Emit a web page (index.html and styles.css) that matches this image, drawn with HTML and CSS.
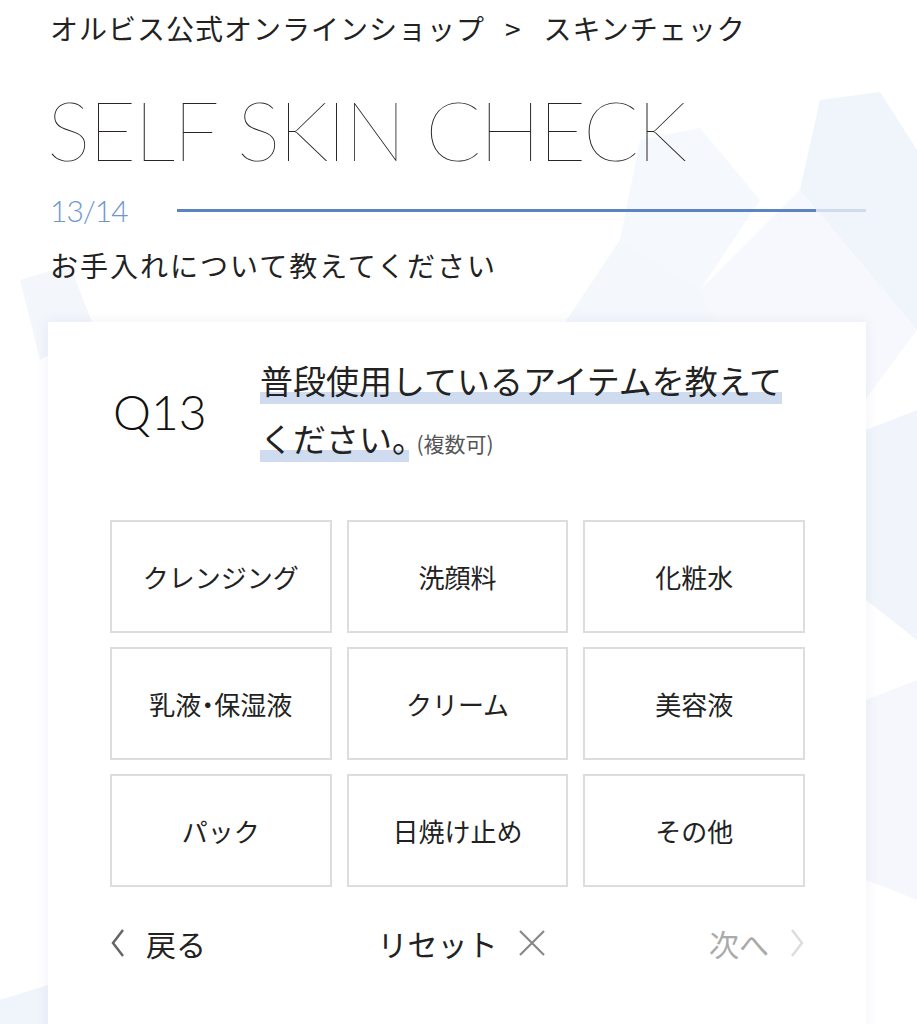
FILE: index.html
```html
<!DOCTYPE html>
<html lang="ja">
<head>
    <meta charset="UTF-8">
    <meta name="viewport" content="width=device-width, initial-scale=1.0">
    <title>SELF SKIN CHECK | オルビス公式オンラインショップ</title>
    <link rel="stylesheet" href="styles.css">
</head>
<body>

<!-- 背景の多角形 -->
<svg class="bg" width="917" height="1024" viewBox="0 0 917 1024" aria-hidden="true">
    <polygon points="820,100 880,92 917,150 917,330 800,190" fill="#f0f4fb"/>
    <polygon points="640,140 700,128 760,200 700,290 620,240" fill="#f5f8fd"/>
    <polygon points="700,290 800,190 917,330 850,420 760,400" fill="#f6f8fd"/>
    <polygon points="560,330 620,240 700,290 760,400 640,420" fill="#f4f7fc"/>
    <polygon points="866,430 917,410 917,640 866,600" fill="#f1f5fb"/>
    <polygon points="866,700 917,680 917,900 866,880" fill="#f5f7fc"/>
    <polygon points="20,280 70,265 95,330 40,360" fill="#f3f6fb"/>
    <polygon points="0,1000 48,985 48,1024 0,1024" fill="#f0f4fb"/>
</svg>

<div class="page">
    <p class="breadcrumb">オルビス公式オンラインショップ<span class="sep">&gt;</span>スキンチェック</p>

    <h1 class="title">SELF SKIN CHECK</h1>

    <div class="progress">
        <span class="progress-count">13/14</span>
        <div class="progress-bar"><div class="progress-fill" style="width: 92.8%;"></div></div>
    </div>

    <p class="lead">お手入れについて教えてください</p>

    <div class="card">
        <div class="question">
            <div class="q-num">Q13</div>
            <p class="q-text"><span class="mark">普段使用しているアイテムを教えてください<span class="half">。</span></span><span class="note">(複数可)</span></p>
        </div>

        <div class="choices">
            <button class="choice">クレンジング</button>
            <button class="choice">洗顔料</button>
            <button class="choice">化粧水</button>
            <button class="choice">乳液<span class="half">・</span>保湿液</button>
            <button class="choice">クリーム</button>
            <button class="choice">美容液</button>
            <button class="choice">パック</button>
            <button class="choice">日焼け止め</button>
            <button class="choice">その他</button>
        </div>

        <div class="nav">
            <a class="nav-back">
                <svg width="16" height="32" viewBox="0 0 16 32"><polyline points="13,3 3,16 13,29" fill="none" stroke="#666" stroke-width="2.5"/></svg>
                戻る
            </a>
            <a class="nav-reset">
                リセット
                <svg width="28" height="28" viewBox="0 0 28 28"><path d="M2 2 L26 26 M26 2 L2 26" stroke="#888" stroke-width="2.2"/></svg>
            </a>
            <a class="nav-next">
                次へ
                <svg width="16" height="32" viewBox="0 0 16 32"><polyline points="3,3 13,16 3,29" fill="none" stroke="#ddd" stroke-width="2.5"/></svg>
            </a>
        </div>
    </div>
</div>

</body>
</html>
```

FILE: styles.css
```css
body {
    margin: 0;
    background-color: #fff;
    color: #222;
    font-family: "Noto Sans CJK JP", "Noto Sans", sans-serif;
    overflow: hidden;
}
.bg {
    position: absolute;
    top: 0;
    left: 0;
    z-index: 0;
}
.page {
    position: relative;
    z-index: 1;
    padding: 0 51px 0 50px;
}
.breadcrumb {
    margin: 0;
    padding-top: 8px;
    font-size: 28px;
    line-height: 40px;
    letter-spacing: 1px;
}
.breadcrumb .sep {
    margin: 0 22px 0 20px;
}
.title {
    margin: 40px 0 0 -3px;
    font-family: Lato, sans-serif;
    font-weight: 100;
    font-size: 82px;
    line-height: 82px;
    letter-spacing: -2px;
    color: #2a2424;
}
.progress {
    display: flex;
    align-items: center;
    margin-top: 22px;
}
.progress-count {
    width: 127px;
    font-family: Lato, sans-serif;
    font-weight: 300;
    font-size: 30px;
    letter-spacing: -1px;
    color: #6f97cf;
}
.progress-bar {
    flex: 1;
    height: 3px;
    background-color: #d0dcee;
}
.progress-fill {
    height: 100%;
    background-color: #5b84c0;
}
.lead {
    margin: 17px 0 0;
    font-size: 28px;
    line-height: 40px;
    letter-spacing: 2px;
}
.card {
    margin: 37px 0 0 -2px;
    padding: 29px 61px 80px 62px;
    background-color: #fff;
    box-shadow: 0 0 12px rgba(120, 140, 180, 0.12);
}
.question {
    display: flex;
    align-items: center;
}
.q-num {
    width: 147px;
    padding-left: 3px;
    font-family: Lato, sans-serif;
    font-weight: 300;
    font-size: 48px;
    color: #111;
}
.q-text {
    flex: 1;
    margin: 0;
    font-size: 33px;
    line-height: 58px;
}
.mark {
    background: linear-gradient(transparent 76%, #cfdcef 76%);
}
.half {
    font-feature-settings: "halt";
}
.note {
    margin-left: 8px;
    font-size: 21px;
    color: #555;
}
.choices {
    display: grid;
    grid-template-columns: repeat(3, 1fr);
    gap: 14px 15px;
    margin-top: 48px;
}
.choice {
    height: 113px;
    background-color: #fff;
    border: 2px solid #dddddd;
    font-family: "Noto Sans CJK JP", sans-serif;
    font-size: 26px;
    color: #222;
    cursor: pointer;
}
.nav {
    display: flex;
    justify-content: space-between;
    align-items: center;
    margin-top: 34px;
    font-size: 30px;
}
.nav a {
    display: flex;
    align-items: center;
    gap: 20px;
    cursor: pointer;
}
.nav-reset {
    margin-left: 8px;
}
.nav-next {
    color: #aaa;
}
```
